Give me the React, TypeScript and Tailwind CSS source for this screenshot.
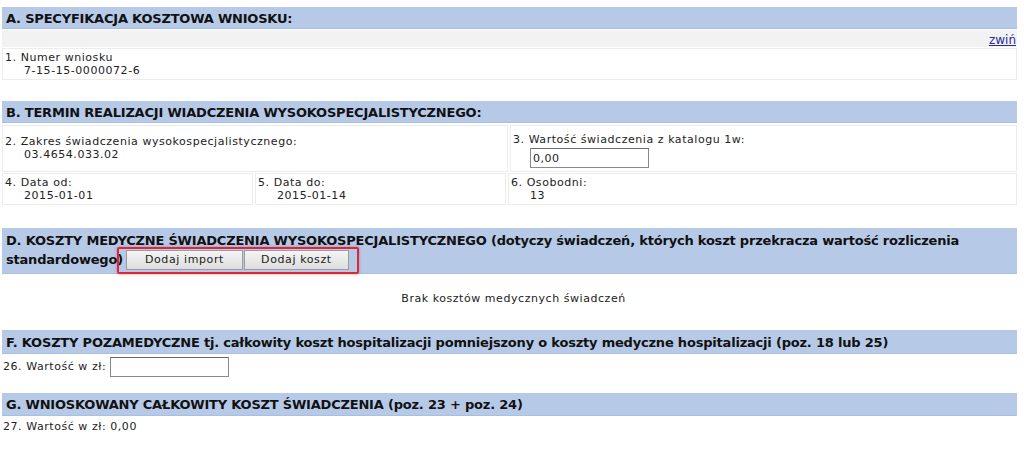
import React from "react";

const font = { fontFamily: '"DejaVu Sans", Verdana, sans-serif' };

const Header = ({ children, className = "" }: { children: React.ReactNode; className?: string }) => (
  <div
    className={`bg-[#b6cae8] border-b border-[#a9bfe0] px-[4px] text-[13px] font-bold text-[#111] tracking-[-0.2px] leading-[19px] ${className}`}
  >
    {children}
  </div>
);

const Cell = ({ label, value, className = "" }: { label: string; value?: React.ReactNode; className?: string }) => (
  <div className={`border border-[#ececec] bg-white px-[2px] flex flex-col justify-center ${className}`}>
    <div className="leading-[13px]">{label}</div>
    {value !== undefined && <div className="pl-[19px] leading-[14px]">{value}</div>}
  </div>
);

export default function App() {
  return (
    <div
      style={font}
      className="w-[1024px] h-[453px] bg-white text-[11px] tracking-[0.55px] text-[#222] pl-[2px] pr-[7px] pt-[7px] overflow-hidden"
    >
      {/* A */}
      <Header className="h-[22px] pt-[2px]">A. SPECYFIKACJA KOSZTOWA WNIOSKU:</Header>
      <div className="h-[17px] bg-[#f2f2f2] mt-[1px] flex justify-end items-end">
        <a href="#" className="text-[#2b2ba0] underline leading-[13px] text-[12px] tracking-normal pr-[1px]">
          zwiń
        </a>
      </div>
      <Cell className="h-[32px] mt-[1px]" label="1. Numer wniosku" value="7-15-15-0000072-6" />

      {/* B */}
      <Header className="h-[22px] pt-[2px] mt-[21px]">B. TERMIN REALIZACJI WIADCZENIA WYSOKOSPECJALISTYCZNEGO:</Header>
      <div className="grid grid-cols-[506px_1fr] gap-[2px] mt-[2px]">
        <Cell className="h-[47px]" label="2. Zakres świadczenia wysokospecjalistycznego:" value="03.4654.033.02" />
        <div className="border border-[#ececec] bg-white px-[2px] h-[47px] flex flex-col justify-center">
          <div className="leading-[13px] mt-[4px]">3. Wartość świadczenia z katalogu 1w:</div>
          <div className="pl-[17px] mt-[2px]">
            <input
              defaultValue="0,00"
              className="w-[119px] h-[20px] border border-[#8a8a8a] border-t-[#6a6a6a] px-[2px] text-[11px] tracking-[0.5px] outline-none"
              style={font}
            />
          </div>
        </div>
      </div>
      <div className="grid grid-cols-[251px_251px_1fr] gap-[2px] mt-[1px]">
        <Cell className="h-[32px]" label="4. Data od:" value="2015-01-01" />
        <Cell className="h-[32px]" label="5. Data do:" value="2015-01-14" />
        <Cell className="h-[32px]" label="6. Osobodni:" value="13" />
      </div>

      {/* D */}
      <Header className="mt-[23px] pt-[3px] pb-[3px]">
        D. KOSZTY MEDYCZNE ŚWIADCZENIA WYSOKOSPECJALISTYCZNEGO (dotyczy świadczeń, których koszt przekracza wartość rozliczenia
        standardowego)
        <span className="relative inline-flex align-top ml-[3px]">
          <span className="absolute -left-[9px] -right-[10px] -top-[3px] -bottom-[4px] border-2 border-[#d8283a] rounded-[2px] shadow-[0_0_3px_rgba(200,40,50,0.5)]" />
          <button
            style={font}
            className="h-[20px] w-[117px] border border-[#9c9c9c] bg-gradient-to-b from-[#f4f4f4] to-[#dedede] text-[11px] leading-[18px] font-normal text-[#222] tracking-[0.6px]"
          >
            Dodaj import
          </button>
          <button
            style={font}
            className="h-[20px] w-[105px] ml-[1px] border border-[#9c9c9c] bg-gradient-to-b from-[#f4f4f4] to-[#dedede] text-[11px] leading-[18px] font-normal text-[#222] tracking-[0.6px]"
          >
            Dodaj koszt
          </button>
        </span>
      </Header>
      <div className="text-center mt-[18px] leading-[14px] pl-[8px]">Brak kosztów medycznych świadczeń</div>

      {/* F */}
      <Header className="h-[24px] pt-[3px] mt-[24px]">
        F. KOSZTY POZAMEDYCZNE tj. całkowity koszt hospitalizacji pomniejszony o koszty medyczne hospitalizacji (poz. 18 lub 25)
      </Header>
      <div className="flex items-center mt-[3px] pl-[1px]">
        <span>26. Wartość w zł:</span>
        <input
          className="ml-[4px] w-[119px] h-[20px] border border-[#8a8a8a] border-t-[#6a6a6a] outline-none"
          style={font}
        />
      </div>

      {/* G */}
      <Header className="h-[23px] pt-[2px] mt-[16px]">
        G. WNIOSKOWANY CAŁKOWITY KOSZT ŚWIADCZENIA (poz. 23 + poz. 24)
      </Header>
      <div className="mt-[4px] pl-[1px] leading-[14px]">27. Wartość w zł: 0,00</div>
    </div>
  );
}
